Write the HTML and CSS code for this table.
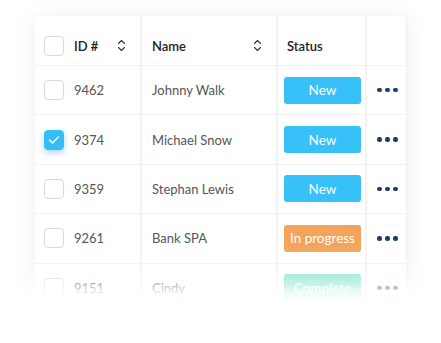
FILE: index.html
```html
<!DOCTYPE html>
<html>
<head>
<meta charset="utf-8">
<link rel="stylesheet" href="styles.css">
</head>
<body>
<div class="stage">
  <div class="card">
    <div class="row head">
      <div class="cell c1">
        <span class="box"></span><span class="lbl">ID #</span>
        <svg class="sort" width="9" height="13" viewBox="0 0 9 13"><path d="M1.5 4.5 L4.5 1.5 L7.5 4.5 M1.5 8.5 L4.5 11.5 L7.5 8.5" fill="none" stroke="#333" stroke-width="1.1" stroke-linecap="round" stroke-linejoin="round"/></svg>
      </div>
      <div class="cell c2">
        <span class="lbl">Name</span>
        <svg class="sort" width="9" height="13" viewBox="0 0 9 13"><path d="M1.5 4.5 L4.5 1.5 L7.5 4.5 M1.5 8.5 L4.5 11.5 L7.5 8.5" fill="none" stroke="#333" stroke-width="1.1" stroke-linecap="round" stroke-linejoin="round"/></svg>
      </div>
      <div class="cell c3"><span class="lbl">Status</span></div>
      <div class="cell c4"></div>
    </div>

    <div class="row">
      <div class="cell c1"><span class="box"></span><span class="id">9462</span></div>
      <div class="cell c2"><span class="name">Johnny Walk</span></div>
      <div class="cell c3"><span class="badge new">New</span></div>
      <div class="cell c4"><span class="dots"><i></i><i></i><i></i></span></div>
    </div>

    <div class="row">
      <div class="cell c1"><span class="box checked"><svg width="12" height="10" viewBox="0 0 12 10"><path d="M1.5 5 L4.5 8 L10.5 1.8" fill="none" stroke="#fff" stroke-width="1.3" stroke-linecap="round" stroke-linejoin="round"/></svg></span><span class="id">9374</span></div>
      <div class="cell c2"><span class="name">Michael Snow</span></div>
      <div class="cell c3"><span class="badge new">New</span></div>
      <div class="cell c4"><span class="dots"><i></i><i></i><i></i></span></div>
    </div>

    <div class="row">
      <div class="cell c1"><span class="box"></span><span class="id">9359</span></div>
      <div class="cell c2"><span class="name">Stephan Lewis</span></div>
      <div class="cell c3"><span class="badge new">New</span></div>
      <div class="cell c4"><span class="dots"><i></i><i></i><i></i></span></div>
    </div>

    <div class="row">
      <div class="cell c1"><span class="box"></span><span class="id">9261</span></div>
      <div class="cell c2"><span class="name">Bank SPA</span></div>
      <div class="cell c3"><span class="badge progress">In progress</span></div>
      <div class="cell c4"><span class="dots"><i></i><i></i><i></i></span></div>
    </div>

    <div class="row">
      <div class="cell c1"><span class="box"></span><span class="id">9151</span></div>
      <div class="cell c2"><span class="name">Cindy</span></div>
      <div class="cell c3"><span class="badge complete">Complete</span></div>
      <div class="cell c4"><span class="dots"><i></i><i></i><i></i></span></div>
    </div>

    <div class="fade"></div>
  </div>
</div>
</body>
</html>
```

FILE: styles.css
```css
* { box-sizing: border-box; }
html, body { margin: 0; padding: 0; background: #fff; }
body {
  font-family: "Lato", "Noto Sans", sans-serif;
  width: 441px;
  height: 343px;
  overflow: hidden;
}
.stage {
  padding: 16px 0 0 35px;
}
.card {
  position: relative;
  width: 372px;
  background: #fff;
  box-shadow: 0 2px 24px rgba(0, 0, 0, 0.07), 0 0 1px rgba(0, 0, 0, 0.06);
}
.row {
  display: grid;
  grid-template-columns: 107px 136px 89px 40px;
  height: 49.4px;
  border-bottom: 1px solid #f1f2f3;
}
.row.head {
  height: 50px;
}
.cell {
  display: flex;
  align-items: center;
  border-right: 2px solid #f2f2f2;
}
.head .cell { padding-top: 10px; }
.c4 { border-right: 1px solid #f0f0f0; }
.c1 { padding-left: 9px; }
.c2 { padding-left: 10px; padding-right: 14px; justify-content: space-between; }
.c3 { padding-left: 6px; }
.c4 { padding-left: 10px; }
.head .c1 { padding-right: 14px; }
.head .c3 { padding-left: 9px; }
.box {
  width: 20px;
  height: 20px;
  border: 1px solid #d3dae2;
  border-radius: 4px;
  background: #fff;
  flex: none;
  display: flex;
  align-items: center;
  justify-content: center;
}
.box.checked {
  background: #36bdf7;
  border-color: #36bdf7;
  box-shadow: 0 3px 6px rgba(30, 140, 200, 0.35);
}
.lbl {
  font-size: 13px;
  font-weight: 600;
  color: #222;
}
.c1 .lbl, .id { margin-left: 10px; }
.c1 .lbl { flex: 1; }
.sort { flex: none; }
.id, .name {
  font-size: 13px;
  color: #555;
}
.badge {
  width: 77px;
  height: 27px;
  border-radius: 3px;
  color: #fff;
  font-size: 13.5px;
  display: flex;
  align-items: center;
  justify-content: center;
}
.badge.new { background: #38c0f9; }
.badge.progress { background: #f3a45a; }
.badge.complete { background: #7fe3c8; }
.dots {
  display: flex;
  gap: 3.5px;
}
.dots i {
  display: block;
  width: 4.5px;
  height: 4.5px;
  border-radius: 50%;
  background: #1d3b63;
}
.fade {
  position: absolute;
  left: -30px;
  right: -40px;
  top: 228px;
  bottom: -40px;
  background: linear-gradient(to bottom,
    rgba(255,255,255,0) 0px,
    rgba(255,255,255,0.1) 14px,
    rgba(255,255,255,0.28) 28px,
    rgba(255,255,255,0.55) 40px,
    rgba(255,255,255,0.85) 48px,
    rgba(255,255,255,1) 58px);
}
```
